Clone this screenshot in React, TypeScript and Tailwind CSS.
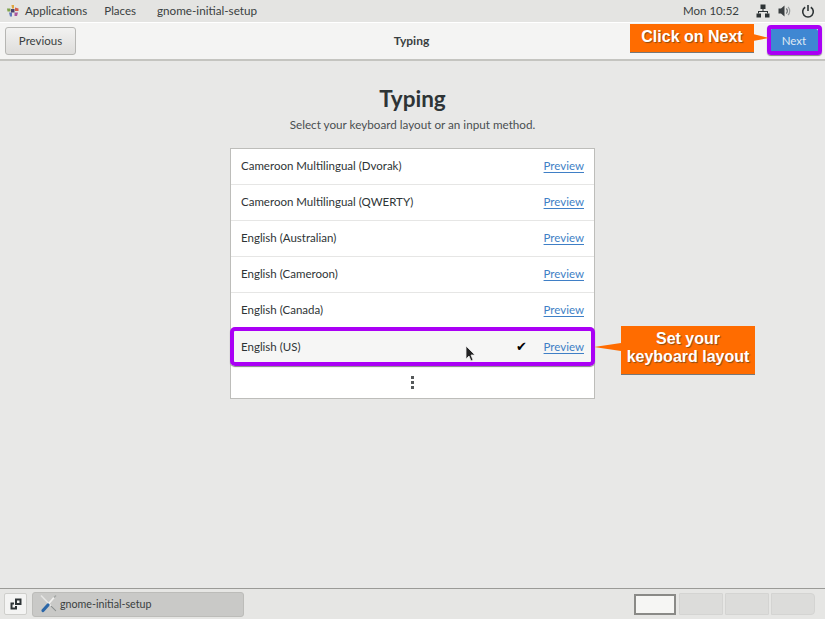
const layouts = [
  "Cameroon Multilingual (Dvorak)",
  "Cameroon Multilingual (QWERTY)",
  "English (Australian)",
  "English (Cameroon)",
  "English (Canada)",
];

function GnomeFoot() {
  return (
    <svg width="12" height="12" viewBox="0 0 12 12">
      <path d="M4.500 0h2.500v3.500H5z" fill="#dfa53f" />
      <path d="M8 2.500l3.500 1v2.500H8z" fill="#d4604a" />
      <path d="M7.500 7.500h3.500l-1 3.500h-2.500z" fill="#a8569f" />
      <path d="M2 7.500h3v4H3z" fill="#5d77bd" />
      <path d="M0 3.500h3.500v3H0.500z" fill="#7fa24a" />
      <rect x="4" y="4" width="3.500" height="3.500" fill="#4a3f6b" />
    </svg>
  );
}

function NetworkIcon() {
  return (
    <svg width="14" height="14" viewBox="0 0 14 14" fill="#2e3436">
      <rect x="4.500" y="0.500" width="5" height="4.500" />
      <rect x="0.500" y="9.500" width="4.500" height="4" />
      <rect x="9" y="9.500" width="4.500" height="4" />
      <path d="M6.500 5h1v2h4.500v2.500h-1V8H3v1.500H2V7h4.500z" />
    </svg>
  );
}

function VolumeIcon() {
  return (
    <svg width="14" height="14" viewBox="0 0 14 14" fill="none">
      <path d="M0.500 4.500h2.500L6.500 1.500v11L3 9.500H0.500z" fill="#3a3f41" />
      <path d="M8.300 4.500a3.500 3.500 0 0 1 0 5" stroke="#6a6e70" strokeWidth="1.200" />
      <path d="M10 2.800a6 6 0 0 1 0 8.400" stroke="#9a9d9e" strokeWidth="1.200" />
    </svg>
  );
}

function PowerIcon() {
  return (
    <svg width="14" height="14" viewBox="0 0 14 14" fill="none" stroke="#2e3436" strokeWidth="1.600">
      <path d="M4.200 3.200a5.300 5.300 0 1 0 5.600 0" />
      <path d="M7 1v6" />
    </svg>
  );
}

function ToolsIcon() {
  return (
    <svg width="20" height="20" viewBox="0 0 20 20" fill="none">
      <path d="M2 1.500l15 15.500" stroke="#e6e6e4" strokeWidth="1.600" />
      <path d="M15 3.500l-6 7" stroke="#f1f1ef" strokeWidth="1.800" />
      <path d="M17 1.500l-2 2" stroke="#a5a8a5" strokeWidth="1.400" />
      <path d="M9 11l-5 5.500" stroke="#2a66a8" strokeWidth="3.200" strokeLinecap="round" />
      <path d="M12 12l5 5" stroke="#8f9392" strokeWidth="1.300" />
    </svg>
  );
}

function WindowsIcon() {
  return (
    <svg width="12" height="12" viewBox="0 0 12 12" fill="#2e3436">
      <path d="M5 0.500h6.500v6.500H5zM7 2.500v2.500h2.500v-2.500z" fillRule="evenodd" />
      <path d="M0.500 4.500h3.500v2H2.500v3H5V8h2v3.500H0.500z" />
    </svg>
  );
}

function Cursor() {
  return (
    <svg width="12" height="17" viewBox="0 0 12 17" className="absolute left-[465px] top-[345px]">
      <path d="M1 1v13l3-3 2 5 2-1-2-5h4z" fill="#222" stroke="#eee" strokeWidth="0.800" />
    </svg>
  );
}

function Preview() {
  return <span className="text-[#3f7fc6] underline underline-offset-2">Preview</span>;
}

export default function App() {
  return (
    <div className="relative flex h-[619px] w-[825px] flex-col overflow-hidden bg-[#e8e8e7] font-['Lato',sans-serif] text-[#2e3436]">
      {/* shell top bar */}
      <div className="flex h-[22px] items-center justify-between bg-[#e4e4e2] pl-[7px] pr-[10px] text-[11.500px] text-[#3a3f41]">
        <div className="flex items-center">
          <GnomeFoot />
          <span className="ml-[6px]">Applications</span>
          <span className="ml-[17px]">Places</span>
          <span className="ml-[21px] text-[11.700px]">gnome-initial-setup</span>
        </div>
        <div className="flex items-center">
          <span className="mr-[17px]">Mon 10:52</span>
          <NetworkIcon />
          <span className="ml-[8px]"><VolumeIcon /></span>
          <span className="ml-[9px]"><PowerIcon /></span>
        </div>
      </div>

      {/* header bar */}
      <div className="grid h-[39px] grid-cols-3 items-center border-t border-b-2 border-t-white border-b-[#c4c4c0] bg-[#f4f4f3] pl-[5px] pr-[7px]">
        <button className="h-[28px] w-[71px] rounded-[3px] border border-[#b6b6b3] bg-gradient-to-b from-[#f2f2f1] to-[#dedddb] text-[11.500px] text-[#3a3f41]">
          Previous
        </button>
        <span className="text-center text-[12px] font-bold text-[#3a3f41]">Typing</span>
        <button className="ml-auto h-[24px] w-[48px] rounded-[2px] bg-[#3f87d2] text-[11.500px] text-[#dfe9f3]">
          Next
        </button>
      </div>

      {/* main */}
      <div className="flex flex-1 flex-col items-center pt-[24px]">
        <h1 className="text-[22.500px] leading-[28px] font-bold text-[#2e3436]">Typing</h1>
        <p className="mt-[3px] text-[11.700px] leading-[16px] text-[#4a4f51]">
          Select your keyboard layout or an input method.
        </p>
        <div className="mt-[16px] w-[365px] border border-[#bdbdba] bg-white text-[11.500px] text-[#2e3436]">
          {layouts.map((name) => (
            <div key={name} className="flex h-[36.100px] items-center justify-between border-b border-[#e6e6e5] px-[10px] pb-[2px]">
              <span>{name}</span>
              <Preview />
            </div>
          ))}
          <div className="flex h-[37px] items-center bg-[#f6f6f5] px-[10px] pb-[2px]">
            <span className="flex-1">English (US)</span>
            <span className="mr-[17px] text-[13px] leading-none text-black">✔</span>
            <Preview />
          </div>
          <div className="flex h-[32px] items-center justify-center">
            <span className="flex flex-col gap-[2px]">
              <i className="block h-[3px] w-[3px] bg-[#55595a]" />
              <i className="block h-[3px] w-[3px] bg-[#55595a]" />
              <i className="block h-[3px] w-[3px] bg-[#55595a]" />
            </span>
          </div>
        </div>
      </div>

      {/* window list */}
      <div className="flex h-[31px] items-center border-t border-[#9a9a97] bg-[#e6e6e4] pl-[4px] pr-[10px]">
        <span className="flex h-[22px] w-[23px] items-center justify-center rounded-[2px] border border-[#cfcfcc] bg-[#f4f4f3]">
          <WindowsIcon />
        </span>
        <div className="ml-[5px] flex h-[25px] w-[212px] items-center rounded-[3px] border border-[#bcbcb9] bg-[#c9c9c7] pl-[6px] text-[10.700px] text-[#3a3f41]">
          <ToolsIcon />
          <span className="ml-[1px]">gnome-initial-setup</span>
        </div>
        <div className="ml-auto flex items-center gap-[2px]">
          <span className="h-[21px] w-[42px] border-2 border-[#8a8a87] bg-[#f6f6f4]" />
          <span className="ml-[1px] h-[22px] w-[44px] rounded-[1px] border border-[#d4d4d2] bg-[#dcdcda]" />
          <span className="h-[22px] w-[44px] rounded-[1px] border border-[#d4d4d2] bg-[#dcdcda]" />
          <span className="h-[22px] w-[44px] rounded-r-[4px] border border-[#d4d4d2] bg-[#dcdcda]" />
        </div>
      </div>

      {/* annotations laid over the screenshot */}
      <div className="absolute left-[767px] top-[25px] h-[30px] w-[55px] rounded-[4px] border-[4px] border-[#aa00f5] shadow-[0_1px_1px_#888]" />
      <div className="absolute left-[230px] top-[327px] h-[39px] w-[365px] rounded-[5px] border-[4px] border-[#aa00f5] shadow-[0_1px_1px_#888]" />

      <div className="absolute left-[630px] top-[24px] flex h-[28px] w-[124px] items-center justify-center bg-[#ff6c00] pb-[2px] font-['Liberation_Sans',sans-serif] text-[16px] font-bold text-white shadow-[0_1px_0_#777] [text-shadow:1px_1px_1px_#8a4a10]">
        Click on Next
      </div>
      <svg width="16" height="8" viewBox="0 0 16 8" className="absolute left-[753px] top-[34px]">
        <path d="M0 0l16 4-16 3z" fill="#ff6c00" />
      </svg>

      <div className="absolute left-[621px] top-[326px] flex h-[48px] w-[134px] flex-col items-center justify-center bg-[#ff6c00] pb-[4px] font-['Liberation_Sans',sans-serif] text-[16px] leading-[18px] font-bold text-white shadow-[0_1px_0_#777] [text-shadow:1px_1px_1px_#8a4a10]">
        <span>Set your</span>
        <span>keyboard layout</span>
      </div>
      <svg width="28" height="10" viewBox="0 0 28 10" className="absolute left-[594px] top-[342px]">
        <path d="M0 5l27-4v8z" fill="#ff6c00" />
      </svg>

      <Cursor />
    </div>
  );
}
